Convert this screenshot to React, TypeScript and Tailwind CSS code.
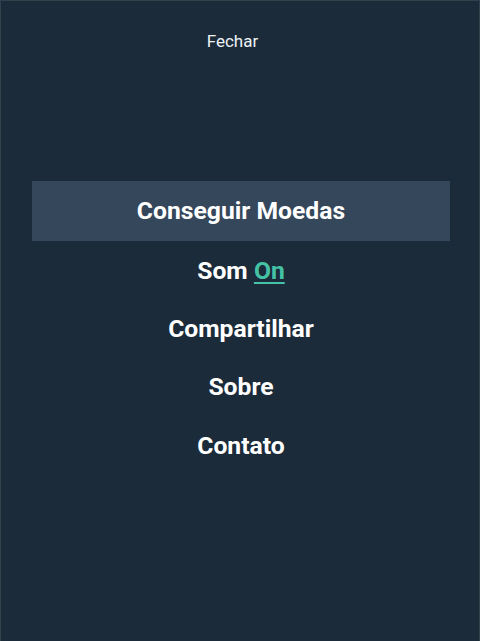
import React from "react";

export default function App() {
  const items = ["Compartilhar", "Sobre", "Contato"];
  return (
    <div
      className="w-[480px] h-[641px] bg-[#1b2b3a] border-t border-l border-r border-[#34414b] flex flex-col text-white"
      style={{ fontFamily: "Roboto, 'Noto Sans', sans-serif" }}
    >
      <div className="h-[81px] flex items-center justify-center pr-[15px]">
        <span className="text-[17px] text-[#eef2f5]">Fechar</span>
      </div>
      <div className="mt-[99px] flex flex-col">
        <div className="ml-[31px] mr-[29px] h-[60px] bg-[#35475a] flex items-center justify-center">
          <span className="text-[24.7px] font-bold">Conseguir Moedas</span>
        </div>
        <div className="h-[58.3px] flex items-center justify-center pl-[2px]">
          <span className="text-[24.7px] font-bold">
            Som{" "}
            <span className="text-[#45c1a6] underline decoration-2 underline-offset-[3px]">On</span>
          </span>
        </div>
        {items.map((t) => (
          <div key={t} className="h-[58.3px] flex items-center justify-center pl-[2px]">
            <span className="text-[24.7px] font-bold">{t}</span>
          </div>
        ))}
      </div>
    </div>
  );
}
